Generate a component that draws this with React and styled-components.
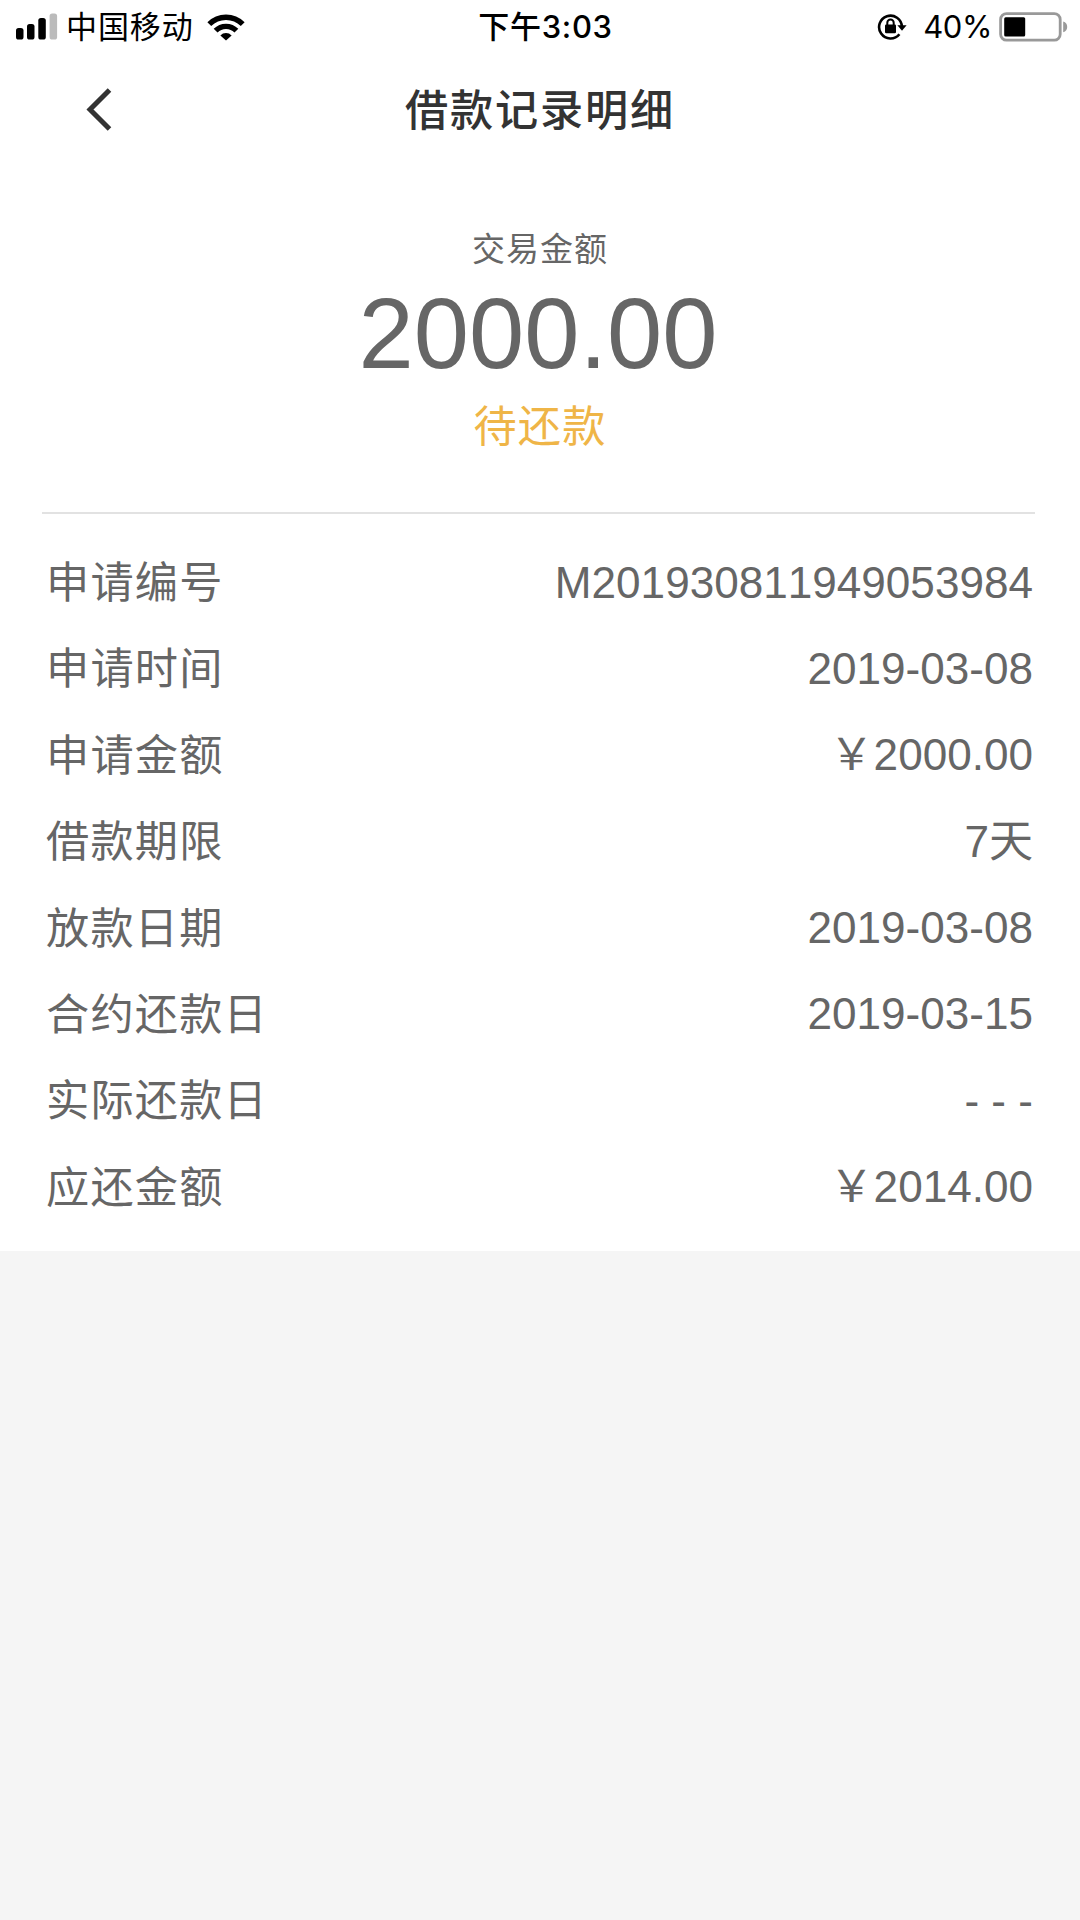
import React from "react";
import styled, { createGlobalStyle } from "styled-components";

const GlobalStyle = createGlobalStyle`
  html, body {
    margin: 0;
    background: #f5f5f5;
  }
  body {
    font-family: "Liberation Sans", "Noto Sans CJK SC", sans-serif;
    font-kerning: none;
    color: #666;
  }
`;

const Page = styled.div`
  width: 1080px;
  min-height: 1920px;
  background: #f5f5f5;
`;

const StatusBar = styled.header`
  display: grid;
  grid-template-columns: 1fr auto 1fr;
  align-items: center;
  height: 53px;
  padding: 0 12px 0 16px;
  box-sizing: border-box;
  background: #fff;
  color: #000;
  font-family: Inter, "Noto Sans CJK SC", sans-serif;
  font-size: 31px;
  line-height: 54px;
  white-space: nowrap;
`;

const StatusGroup = styled.div`
  display: flex;
  align-items: center;
  justify-content: ${(p) => (p.$end ? "flex-end" : "flex-start")};
  height: 53px;
  svg {
    display: block;
    flex: none;
  }
`;

const Carrier = styled.span`
  margin: 0 13px 0 8px;
  font-size: 31px;
  letter-spacing: 0.9px;
`;

const Clock = styled.span`
  padding-left: 7px;
  font-weight: 500;
  letter-spacing: 0.7px;
`;

const BatteryLevel = styled.span`
  margin: 0 7px 0 16px;
  letter-spacing: -0.4px;
`;

const NavBar = styled.nav`
  display: grid;
  grid-template-columns: 160px 1fr 160px;
  align-items: center;
  height: 111px;
  background: #fff;
`;

const BackButton = styled.button`
  display: flex;
  margin: 0;
  padding: 0 0 0 84px;
  border: 0;
  background: none;
`;

const Title = styled.h1`
  margin: 0;
  padding-top: 5px;
  color: #333;
  font-size: 43.2px;
  font-weight: 500;
  line-height: 106px;
  letter-spacing: 1.8px;
  text-align: center;
`;

const Panel = styled.main`
  padding: 61px 45px 20.3px 42px;
  background: #fff;
`;

const Summary = styled.section`
  display: flex;
  flex-direction: column;
  align-items: center;
  height: 288.5px;
  padding-left: 3px;
  border-bottom: 2px solid #e2e2e2;
  box-sizing: border-box;
`;

const Caption = styled.div`
  font-size: 33px;
  line-height: 50px;
  letter-spacing: 1px;
`;

const Amount = styled.div`
  padding-right: 4px;
  font-size: 99.3px;
  line-height: 118px;
`;

const State = styled.div`
  color: #efb547;
  font-size: 43.2px;
  line-height: 68px;
  letter-spacing: 1.2px;
`;

const Details = styled.dl`
  margin: 0;
  padding: 26px 2px 0 4px;
`;

const Row = styled.div`
  display: flex;
  justify-content: space-between;
  height: 86.4px;
  line-height: 86.4px;
`;

const Label = styled.dt`
  padding-top: 0.5px;
  font-size: 43.2px;
  letter-spacing: 1.2px;
`;

const Value = styled.dd`
  margin: 0;
  font-size: 44.1px;
`;

const rows = [
  ["申请编号", "M201930811949053984"],
  ["申请时间", "2019-03-08"],
  ["申请金额", "\uFFE52000.00"],
  ["借款期限", "7天"],
  ["放款日期", "2019-03-08"],
  ["合约还款日", "2019-03-15"],
  ["实际还款日", "- - -"],
  ["应还金额", "\uFFE52014.00"],
];

const SignalIcon = () => (
  <svg width="42" height="28" viewBox="0 0 42 28">
    <rect x="0" y="15" width="7.5" height="11.5" rx="2.6" />
    <rect x="11" y="11" width="7.5" height="15.5" rx="2.6" />
    <rect x="22.3" y="5" width="7.5" height="21.5" rx="2.6" />
    <rect x="33.6" y="0.5" width="7.5" height="26" rx="2.6" fill="#bbb" />
  </svg>
);

const WifiIcon = () => (
  <svg width="38" height="27" viewBox="0 0 38 27" fill="none" stroke="#000" strokeWidth="5.4">
    <path d="M2.3 10.2a23.5 23.5 0 0 1 33.4 0" />
    <path d="M8.600 16.700a14.600 14.600 0 0 1 20.800 0" />
    <path d="M19 26.600l-5.600-5.200a7.800 7.800 0 0 1 11.200 0z" fill="#000" stroke="none" />
  </svg>
);

const RotationLockIcon = () => (
  <svg width="30" height="28" viewBox="0 0 30 28">
    <path
      d="M22.4 21.200a11.400 11.400 0 1 1 2.500-7.500"
      fill="none"
      stroke="#000"
      strokeWidth="2.600"
    />
    <path d="M20.400 12.200h9.200l-4.600 5.600z" />
    <rect x="8" y="11.400" width="11" height="8.900" rx="1.200" />
    <path
      d="M10.300 12v-2.300a3.200 3.200 0 0 1 6.400 0v2.300"
      fill="none"
      stroke="#000"
      strokeWidth="2"
    />
  </svg>
);

const BatteryIcon = () => (
  <svg width="69" height="30" viewBox="0 0 69 30">
    <rect x="1.6" y="1.600" width="59.6" height="26.6" rx="6" fill="none" stroke="#999" strokeWidth="2.8" />
    <rect x="5.2" y="5.200" width="21" height="19.4" rx="1.5" />
    <path d="M64.2 9.600c2.6.8 4 2.7 4 5.3s-1.4 4.5-4 5.3z" fill="#999" />
  </svg>
);

const BackIcon = () => (
  <svg width="28" height="46" viewBox="0 0 28 46">
    <path d="M25.500 4L6 23.500l19.500 19.500" fill="none" stroke="#333" strokeWidth="5" />
  </svg>
);

export default function App() {
  return (
    <>
      <GlobalStyle />
      <Page>
        <StatusBar>
          <StatusGroup>
            <SignalIcon />
            <Carrier>中国移动</Carrier>
            <WifiIcon />
          </StatusGroup>
          <Clock>下午3:03</Clock>
          <StatusGroup $end>
            <RotationLockIcon />
            <BatteryLevel>40%</BatteryLevel>
            <BatteryIcon />
          </StatusGroup>
        </StatusBar>
        <NavBar>
          <BackButton aria-label="返回">
            <BackIcon />
          </BackButton>
          <Title>借款记录明细</Title>
        </NavBar>
        <Panel>
          <Summary>
            <Caption>交易金额</Caption>
            <Amount>2000.00</Amount>
            <State>待还款</State>
          </Summary>
          <Details>
            {rows.map(([label, value]) => (
              <Row key={label}>
                <Label>{label}</Label>
                <Value>{value}</Value>
              </Row>
            ))}
          </Details>
        </Panel>
      </Page>
    </>
  );
}
